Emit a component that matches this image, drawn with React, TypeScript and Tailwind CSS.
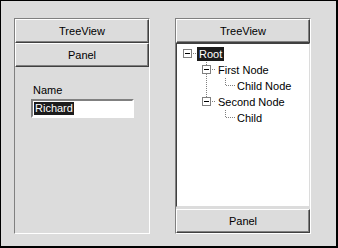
type Cell = 'blank' | 'vline' | 'box' | 'boxUp' | 'boxBoth' | 'elbow';

const dot = { stroke: '#808080', strokeDasharray: '1 1', shapeRendering: 'crispEdges' as const };

const TreeCell = ({ kind }: { kind: Cell }) => {
  const isBox = kind === 'box' || kind === 'boxUp' || kind === 'boxBoth';
  return (
    <svg width="19" height="16" className="shrink-0">
      {kind === 'vline' && <line x1="9.5" y1="0" x2="9.5" y2="16" {...dot} />}
      {kind === 'elbow' && (
        <>
          <line x1="9.5" y1="0" x2="9.5" y2="8" {...dot} />
          <line x1="10" y1="7.5" x2="19" y2="7.5" {...dot} />
        </>
      )}
      {isBox && (
        <>
          {(kind === 'boxUp' || kind === 'boxBoth') && <line x1="9.5" y1="0" x2="9.5" y2="3" {...dot} />}
          {kind === 'boxBoth' && <line x1="9.5" y1="12" x2="9.5" y2="16" {...dot} />}
          <rect x="5.5" y="3.5" width="8" height="8" fill="white" stroke="#808080" shapeRendering="crispEdges" />
          <line x1="7" y1="7.5" x2="12" y2="7.5" stroke="black" shapeRendering="crispEdges" />
          <line x1="15" y1="7.5" x2="19" y2="7.5" {...dot} />
        </>
      )}
    </svg>
  );
};

const TreeRow = ({ cells, label, selected }: { cells: Cell[]; label: string; selected?: boolean }) => (
  <div className="flex items-center h-[16px]">
    {cells.map((c, i) => (
      <TreeCell key={i} kind={c} />
    ))}
    <span
      className={`h-[14px] leading-[14px] px-[2px] ${selected ? 'bg-[#1c1c1c] text-white' : 'text-black'}`}
    >
      {label}
    </span>
  </div>
);

const Btn = ({ label, className = '' }: { label: string; className?: string }) => (
  <div
    className={`h-[24px] shrink-0 flex items-center justify-center bg-[#dcdcdc] border border-t-white border-l-white border-b-[#404040] border-r-[#404040] shadow-[inset_-1px_-1px_0_#808080] text-[11px] text-black ${className}`}
  >
    {label}
  </div>
);

const App = () => {
  return (
    <div
      className="w-[338px] h-[248px] bg-[#dcdcdc] border-t border-l border-r-2 border-b-2 border-black flex gap-[25px] pt-[17px] pl-[13px] pb-[12px]"
      style={{ fontFamily: '"Liberation Sans", Arial, sans-serif' }}
    >
      {/* Left panel */}
      <div className="w-[136px] flex flex-col border border-t-[#808080] border-l-[#808080] border-b-white border-r-white">
        <Btn label="TreeView" />
        <Btn label="Panel" />
        <div className="flex flex-col pl-[16px] pt-[17px] text-[11px]">
          <span className="ml-[2px] leading-[13px] text-black">Name</span>
          <div className="mt-[2px] w-[103px] h-[19px] bg-white border-2 border-t-[#808080] border-l-[#808080] border-b-white border-r-white flex items-center pl-[1px]">
            <span className="bg-[#1c1c1c] text-white leading-[13px] px-[1px]">Richard</span>
          </div>
        </div>
      </div>

      {/* Right panel */}
      <div className="w-[136px] flex flex-col border border-t-[#808080] border-l-[#808080] border-b-white border-r-white">
        <Btn label="TreeView" />
        <div className="flex-1 bg-white border border-t-[#404040] border-l-[#404040] border-b-[#dcdcdc] border-r-[#dcdcdc] pt-[2px] pl-[1px] text-[11px]">
          <TreeRow cells={['box']} label="Root" selected />
          <TreeRow cells={['blank', 'boxBoth']} label="First Node" />
          <TreeRow cells={['blank', 'vline', 'elbow']} label="Child Node" />
          <TreeRow cells={['blank', 'boxUp']} label="Second Node" />
          <TreeRow cells={['blank', 'blank', 'elbow']} label="Child" />
        </div>
        <Btn label="Panel" className="mt-[2px]" />
      </div>
    </div>
  );
};

export default App;
